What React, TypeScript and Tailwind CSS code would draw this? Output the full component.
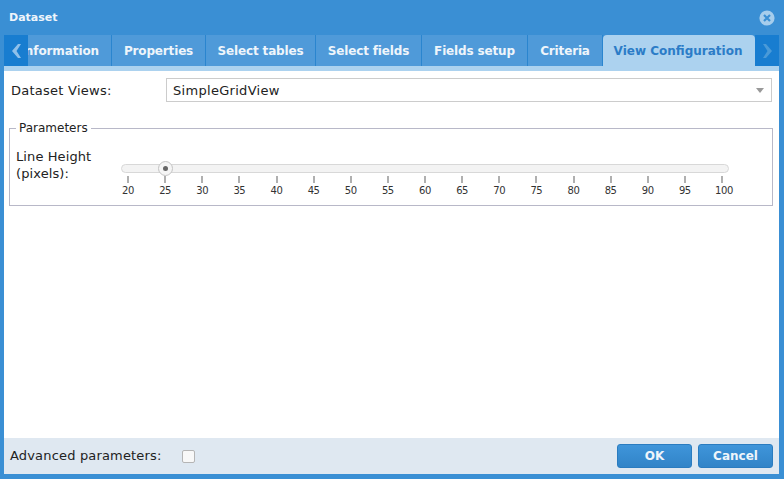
const tabs = [
  { label: 'Properties', w: 'w-[94px]' },
  { label: 'Select tables', w: 'w-[110px]' },
  { label: 'Select fields', w: 'w-[106px]' },
  { label: 'Fields setup', w: 'w-[106px]' },
  { label: 'Criteria', w: 'w-[75px]' },
]

const ticks = [20, 25, 30, 35, 40, 45, 50, 55, 60, 65, 70, 75, 80, 85, 90, 95, 100]

function Chevron({ flip, color }: { flip?: boolean; color: string }) {
  return (
    <svg width="9" height="14" viewBox="0 0 9 14" className={flip ? 'rotate-180' : ''}>
      <path d="M9 0 L6 0 L0 7 L6 14 L9 14 L4.5 7 Z" fill={color} />
    </svg>
  )
}

export default function App() {
  return (
    <div className="w-[784px] h-[480px] bg-white overflow-hidden font-['DejaVu_Sans',sans-serif]">
      <div className="w-[784px] h-[479px] bg-[#3a8fd4] flex flex-col pl-[4px] pb-[5px] pr-[5px] box-border">
        {/* Title bar */}
        <div className="h-[35px] flex items-center justify-between shrink-0">
          <span className="text-[11px] font-bold text-[#eef5fb] pl-[5px] pt-[1px]">Dataset</span>
          <svg width="16" height="16" viewBox="0 0 16 16" className="mr-[4px]">
            <circle cx="8" cy="8" r="7.6" fill="#a6cdec" />
            <path d="M5 5 L11 11 M11 5 L5 11" stroke="#3a8fd4" strokeWidth="2.2" />
          </svg>
        </div>

        {/* Tabs */}
        <div className="h-[31px] flex shrink-0">
          <div className="w-[24px] bg-[#187dd0] flex items-center justify-center shrink-0">
            <Chevron color="#8fc0ea" />
          </div>
          <div className="flex-1 flex overflow-hidden">
            <div className="w-[84px] shrink-0 bg-[#4f9ad9] border-r border-[#2a85cf] flex items-center justify-end pr-[12px]">
              <span className="text-[12px] font-bold text-[#eef5fb] whitespace-nowrap tracking-[-0.1px]">Information</span>
            </div>
            {tabs.map((t) => (
              <div
                key={t.label}
                className={`${t.w} shrink-0 bg-[#4f9ad9] border-r border-[#2a85cf] flex items-center justify-center`}
              >
                <span className="text-[12px] font-bold text-[#eef5fb] whitespace-nowrap tracking-[-0.15px]">{t.label}</span>
              </div>
            ))}
            <div className="flex-1 bg-[#acd2ef] rounded-t-[4px] flex items-center justify-center">
              <span className="text-[12px] font-bold text-[#2b7cc7] whitespace-nowrap pr-[2px]">View Configuration</span>
            </div>
          </div>
          <div className="w-[24px] bg-[#187dd0] flex items-center justify-center shrink-0">
            <Chevron flip color="#4a9ad8" />
          </div>
        </div>
        <div className="h-[5px] bg-[#acd2ef] shrink-0" />

        {/* Content */}
        <div className="flex-1 bg-white pl-[5px] pr-[6px] pt-[7px] flex flex-col text-[#222]">
          <div className="flex items-center h-[24px]">
            <span className="w-[157px] pl-[2px] pt-[1px] text-[13px] tracking-[0.25px] shrink-0">Dataset Views:</span>
            <div className="w-[606px] h-[24px] border border-[#cccccc] flex items-center justify-between pl-[6px] pr-[7px]">
              <span className="text-[13px] tracking-[0.3px] pt-[1px]">SimpleGridView</span>
              <div className="w-0 h-0 border-x-[4px] border-x-transparent border-t-[5px] border-t-[#999]" />
            </div>
          </div>

          <fieldset className="mt-[19px] h-[85px] border border-[#b8b8c8] px-[6px] pb-0 m-0 min-w-0">
            <legend className="px-[3px] text-[12px] leading-[14px]">Parameters</legend>
            <div className="flex pt-[13px]">
              <div className="w-[105px] text-[13px] leading-[17px] shrink-0 tracking-[0.1px]">
                Line Height
                <br />
                (pixels):
              </div>
              <div className="w-[608px] pt-[16px]">
                {/* Slider */}
                <div className="relative h-[9px] bg-[#f3f3f3] border border-[#d8d8d8] rounded-[5px]">
                  <div className="absolute left-[36px] top-[-4px] w-[15px] h-[15px] rounded-full bg-[#f5f5f5] border border-[#c4c4c4] flex items-center justify-center">
                    <div className="w-[5px] h-[5px] rounded-full bg-[#666]" />
                  </div>
                </div>
                <div className="flex justify-between pl-[7px] pr-[7px] mt-[3px]">
                  {ticks.map((n) => (
                    <div key={n} className="w-0 flex flex-col items-center">
                      <div className="w-[2px] h-[7px] bg-[#b0b0b0] shrink-0" />
                      <span
                        className={`text-[10px] leading-[12px] mt-[2px] text-[#333] tracking-[-0.4px] ${
                          n === 100 ? 'ml-[4px]' : ''
                        }`}
                      >
                        {n}
                      </span>
                    </div>
                  ))}
                </div>
              </div>
            </div>
          </fieldset>
        </div>

        {/* Footer */}
        <div className="h-[36px] bg-[#dfe8f1] shrink-0 flex items-center justify-between pl-[6px] pr-[6px]">
          <div className="flex items-center">
            <span className="text-[13px] text-[#222] tracking-[0.17px]">Advanced parameters:</span>
            <div className="ml-[20px] w-[13px] h-[13px] rounded-[2px] border border-[#b5b5b5] bg-[#f8f8f8]" />
          </div>
          <div className="flex gap-[6px]">
            <div className="w-[75px] h-[24px] rounded-[3px] border border-[#2a7cc0] bg-[linear-gradient(#3f95da,#3184c8)] flex items-center justify-center text-[12px] font-bold text-[#eef5fb]">
              OK
            </div>
            <div className="w-[75px] h-[24px] rounded-[3px] border border-[#2a7cc0] bg-[linear-gradient(#3f95da,#3184c8)] flex items-center justify-center text-[12px] font-bold text-[#eef5fb]">
              Cancel
            </div>
          </div>
        </div>
      </div>
    </div>
  )
}
